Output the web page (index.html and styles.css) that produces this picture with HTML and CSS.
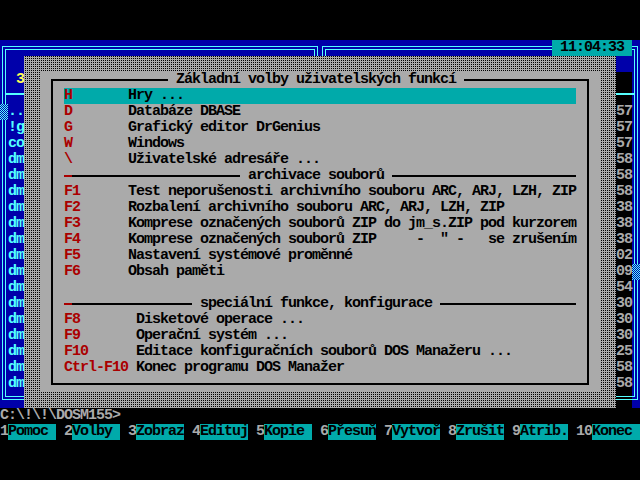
FILE: index.html
```html
<!DOCTYPE html>
<html lang="cs">
<head>
<meta charset="utf-8">
<title>DOS Manažer</title>
<link rel="stylesheet" href="styles.css">
</head>
<body>
<div class="screen">
  <div class="panels">
    <section class="panel panel-left">
      <div class="dbl-outer">
        <div class="dbl-inner">
          <div class="rows">
            <div class="row"></div>
            <div class="row"> <span class="yellow">3</span></div>
            <div class="row hdr"><div class="hline"></div></div>
            <div class="row">..</div>
            <div class="row">!g</div>
            <div class="row">co</div>
            <div class="row">dm</div>
            <div class="row">dm</div>
            <div class="row">dm</div>
            <div class="row">dm</div>
            <div class="row">dm</div>
            <div class="row">dm</div>
            <div class="row">dm</div>
            <div class="row">dm</div>
            <div class="row">dm</div>
            <div class="row">dm</div>
            <div class="row">dm</div>
            <div class="row">dm</div>
            <div class="row">dm</div>
            <div class="row">dm</div>
            <div class="row">dm</div>
          </div>
        </div>
      </div>
      <div class="thumb thumb-left"></div>
    </section>
    <section class="panel panel-right">
      <div class="dbl-outer">
        <div class="dbl-inner">
          <div class="rows">
            <div class="row"></div>
            <div class="row"></div>
            <div class="row hdr"><div class="hline"></div></div>
            <div class="row">57</div>
            <div class="row">57</div>
            <div class="row">57</div>
            <div class="row">58</div>
            <div class="row">58</div>
            <div class="row">58</div>
            <div class="row">38</div>
            <div class="row">38</div>
            <div class="row">38</div>
            <div class="row">02</div>
            <div class="row">09</div>
            <div class="row">54</div>
            <div class="row">30</div>
            <div class="row">30</div>
            <div class="row">30</div>
            <div class="row">25</div>
            <div class="row">58</div>
            <div class="row">58</div>
          </div>
        </div>
      </div>
      <div class="thumb thumb-right"></div>
    </section>
  </div>

  <div class="cmdline">C:\!\!\DOSM155&gt;</div>

  <div class="keybar">
    <div class="slot"><span class="kn">1</span><span class="kl">Pomoc</span></div>
    <div class="slot"><span class="kn">2</span><span class="kl">Volby</span></div>
    <div class="slot"><span class="kn">3</span><span class="kl">Zobraz</span></div>
    <div class="slot"><span class="kn">4</span><span class="kl">Edituj</span></div>
    <div class="slot"><span class="kn">5</span><span class="kl">Kopie</span></div>
    <div class="slot"><span class="kn">6</span><span class="kl">Přesuň</span></div>
    <div class="slot"><span class="kn">7</span><span class="kl">Vytvoř</span></div>
    <div class="slot"><span class="kn">8</span><span class="kl">Zrušit</span></div>
    <div class="slot"><span class="kn">9</span><span class="kl">Atrib.</span></div>
    <div class="slot"><span class="kn">10</span><span class="kl">Konec</span></div>
  </div>

  <div class="clock"> 11:04:33 </div>

  <div class="dialog">
    <div class="dlg-body">
      <div class="frame">
        <div class="title-row"><span class="title"> Základní volby uživatelských funkcí </span></div>
        <div class="item active"><span class="key">H</span><span class="label">Hry ...</span></div>
        <div class="item"><span class="key">D</span><span class="label">Databáze DBASE</span></div>
        <div class="item"><span class="key">G</span><span class="label">Grafický editor DrGenius</span></div>
        <div class="item"><span class="key">W</span><span class="label">Windows</span></div>
        <div class="item"><span class="key">\</span><span class="label">Uživatelské adresáře ...</span></div>
        <div class="sep"><span class="ln red"></span><span class="ln ln-a"></span><span class="sep-text"> archivace souborů </span><span class="ln grow"></span></div>
        <div class="item"><span class="key">F1</span><span class="label">Test neporušenosti archivního souboru ARC, ARJ, LZH, ZIP</span></div>
        <div class="item"><span class="key">F2</span><span class="label">Rozbalení archivního souboru ARC, ARJ, LZH, ZIP</span></div>
        <div class="item"><span class="key">F3</span><span class="label">Komprese označených souborů ZIP do jm_s.ZIP pod kurzorem</span></div>
        <div class="item"><span class="key">F4</span><span class="label">Komprese označených souborů ZIP     -  " -   se zrušením</span></div>
        <div class="item"><span class="key">F5</span><span class="label">Nastavení systémové proměnné</span></div>
        <div class="item"><span class="key">F6</span><span class="label">Obsah paměti</span></div>
        <div class="item"></div>
        <div class="sep"><span class="ln red"></span><span class="ln ln-b"></span><span class="sep-text"> speciální funkce, konfigurace </span><span class="ln grow"></span></div>
        <div class="item"><span class="key wide">F8</span><span class="label">Disketové operace ...</span></div>
        <div class="item"><span class="key wide">F9</span><span class="label">Operační systém ...</span></div>
        <div class="item"><span class="key wide">F10</span><span class="label">Editace konfiguračních souborů DOS Manažeru ...</span></div>
        <div class="item"><span class="key wide">Ctrl-F10</span><span class="label">Konec programu DOS Manažer</span></div>
      </div>
    </div>
  </div>
</div>
</body>
</html>
```

FILE: styles.css
```css
html, body {
  margin: 0;
  padding: 0;
  background: #000;
}

body {
  width: 640px;
  height: 480px;
  overflow: hidden;
}

.screen {
  position: relative;
  width: 640px;
  height: 400px;
  margin-top: 40px;
  font-family: "Liberation Mono", "DejaVu Sans Mono", monospace;
  font-weight: bold;
  font-size: 15px;
  letter-spacing: -1px;
  line-height: 16px;
  color: #aaaaaa;
}

.row, .key, .label, .title, .sep-text, .cmdline, .kn, .kl, .clock {
  white-space: pre;
}

/* ---------- panels ---------- */
.panels {
  display: flex;
  height: 368px;
}

.panel {
  position: relative;
  width: 320px;
  height: 368px;
  box-sizing: border-box;
  padding: 6px 2px 8px;
  background: #0000aa;
  color: #55ffff;
}

.panel-right {
  background:
    linear-gradient(#000, #000) 0 32px / 312px 100% no-repeat,
    #0000aa;
  color: #aaaaaa;
}

.dbl-outer {
  height: 100%;
  box-sizing: border-box;
  border: 1px solid #55ffff;
  padding: 2px;
}

.dbl-inner {
  height: 100%;
  box-sizing: border-box;
  border: 1px solid #55ffff;
}

.rows {
  padding: 6px 2px 0;
}

.panel-right .rows {
  text-align: right;
}

.row {
  height: 16px;
}

.hdr {
  box-sizing: border-box;
  padding-top: 5px;
}

.hline {
  height: 2px;
  margin: 0 -2px;
  background: #55ffff;
}

.yellow {
  color: #ffff55;
}

.thumb {
  position: absolute;
  width: 8px;
  height: 16px;
  background: conic-gradient(#55ffff 0 25%, #0000aa 0 50%, #55ffff 0 75%, #0000aa 0) 0 0 / 2px 2px;
}

.thumb-left {
  left: 0;
  top: 64px;
}

.thumb-right {
  right: 0;
  top: 224px;
}

/* ---------- bottom lines ---------- */
.cmdline {
  height: 16px;
  color: #aaaaaa;
}

.keybar {
  display: flex;
  height: 16px;
}

.slot {
  display: flex;
  width: 64px;
}

.kn {
  color: #aaaaaa;
}

.kl {
  width: 48px;
  background: #00aaaa;
  color: #000;
}

/* ---------- clock ---------- */
.clock {
  position: absolute;
  left: 552px;
  top: 0;
  width: 80px;
  height: 16px;
  background: #00aaaa;
  color: #000;
}

/* ---------- dialog ---------- */
.dialog {
  position: absolute;
  left: 24px;
  top: 16px;
  width: 592px;
  height: 352px;
  box-sizing: border-box;
  padding: 16px;
  background: conic-gradient(#000 0 25%, #aaaaaa 0) 0 0 / 2px 2px;
  color: #000;
}

.dlg-body {
  height: 320px;
  box-sizing: border-box;
  padding: 0 8px;
  background: #aaaaaa;
  overflow: hidden;
}

.frame {
  margin: 7px 3px;
  padding: 7px 3px;
  border: 2px solid #000;
  height: 288px;
}

.title-row {
  height: 16px;
  margin-top: -16px;
  padding-left: 112px;
}

.title {
  display: inline-block;
  height: 16px;
  background: #aaaaaa;
}

.item {
  display: flex;
  height: 16px;
  margin: 0 8px;
}

.item.active {
  background: #00aaaa;
}

.key {
  width: 64px;
  flex: none;
  color: #aa0000;
}

.key.wide {
  width: 72px;
}

.sep {
  display: flex;
  align-items: flex-start;
  height: 16px;
  margin: 0 8px;
}

.ln {
  height: 2px;
  margin-top: 7px;
  background: #000;
}

.ln.red {
  width: 8px;
  background: #aa0000;
}

.ln-a {
  width: 168px;
}

.ln-b {
  width: 120px;
}

.ln.grow {
  flex: 1;
}
```
